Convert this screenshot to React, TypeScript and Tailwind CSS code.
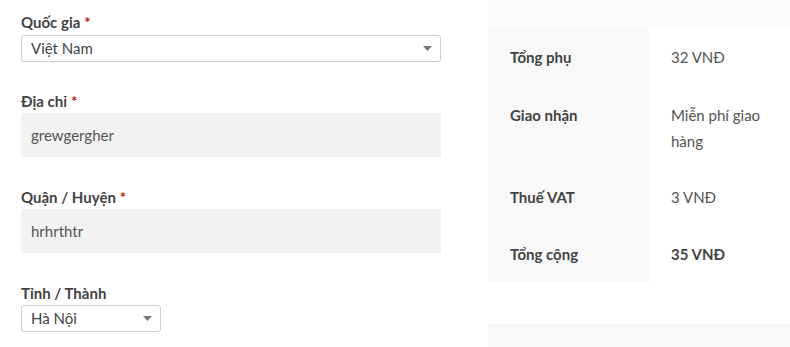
import React from 'react';

const font = { fontFamily: 'Lato, "Noto Sans", sans-serif' };

function Label({ text, required }: { text: string; required?: boolean }) {
  return (
    <div className="text-[15px] leading-[20px] font-bold text-[#434343]">
      {text}
      {required && <span className="text-[#b81c23] ml-[4px]">*</span>}
    </div>
  );
}

function Caret() {
  return (
    <svg width="9" height="5" viewBox="0 0 9 5" className="shrink-0">
      <path d="M0 0h9L4.5 5z" fill="#777" />
    </svg>
  );
}

function Select({ value, width, mt }: { value: string; width: string; mt: string }) {
  return (
    <div
      className={`${width} ${mt} h-[27px] shrink-0 flex items-center justify-between pl-[9px] pr-[8px] border border-[#cfcfcf] rounded-[3px] bg-white text-[15px] text-[#444]`}
    >
      <span>{value}</span>
      <Caret />
    </div>
  );
}

function Input({ value }: { value: string }) {
  return (
    <div className="w-[420px] h-[44px] shrink-0 mt-[2px] flex items-center px-[10px] bg-[#f2f2f2] text-[15px] text-[#555]">
      {value}
    </div>
  );
}

const rows: { th: string; td: React.ReactNode; h: string; bold?: boolean }[] = [
  { th: 'Tổng phụ', td: '32 VNĐ', h: 'h-[58px]' },
  { th: 'Giao nhận', td: <>Miễn phí giao<br />hàng</>, h: 'h-[82px]' },
  { th: 'Thuế VAT', td: '3 VNĐ', h: 'h-[57px]' },
  { th: 'Tổng cộng', td: '35 VNĐ', h: 'h-[57px]', bold: true },
];

export default function App() {
  return (
    <div className="w-[790px] h-[347px] overflow-hidden bg-white flex" style={font}>
      <div className="w-[488px] pl-[21px] pt-[12px] flex flex-col">
        <Label text="Quốc gia" required />
        <Select value="Việt Nam" width="w-[420px]" mt="mt-[3px]" />
        <div className="h-[29px] shrink-0" />
        <Label text="Địa chỉ" required />
        <Input value="grewgergher" />
        <div className="h-[30px] shrink-0" />
        <Label text="Quận / Huyện" required />
        <Input value="hrhrthtr" />
        <div className="h-[30px] shrink-0" />
        <Label text="Tỉnh / Thành" />
        <Select value="Hà Nội" width="w-[140px]" mt="mt-[2px]" />
      </div>
      <div className="flex-1 flex flex-col">
        <div className="h-[28px] bg-[#fcfcfc]" />
        {rows.map((r) => (
          <div key={r.th} className={`flex ${r.h}`}>
            <div className="w-[161px] bg-[#f8f8f8] pl-[22px] pt-[16px] text-[15px] leading-[26px] font-bold text-[#434343]">
              {r.th}
            </div>
            <div
              className={`flex-1 pl-[22px] pt-[16px] text-[15px] leading-[26px] ${
                r.bold ? 'font-bold text-[#434343]' : 'text-[#555]'
              }`}
            >
              {r.td}
            </div>
          </div>
        ))}
        <div className="h-[42px]" />
        <div className="flex-1 bg-[#f8f8f8]" />
      </div>
    </div>
  );
}
